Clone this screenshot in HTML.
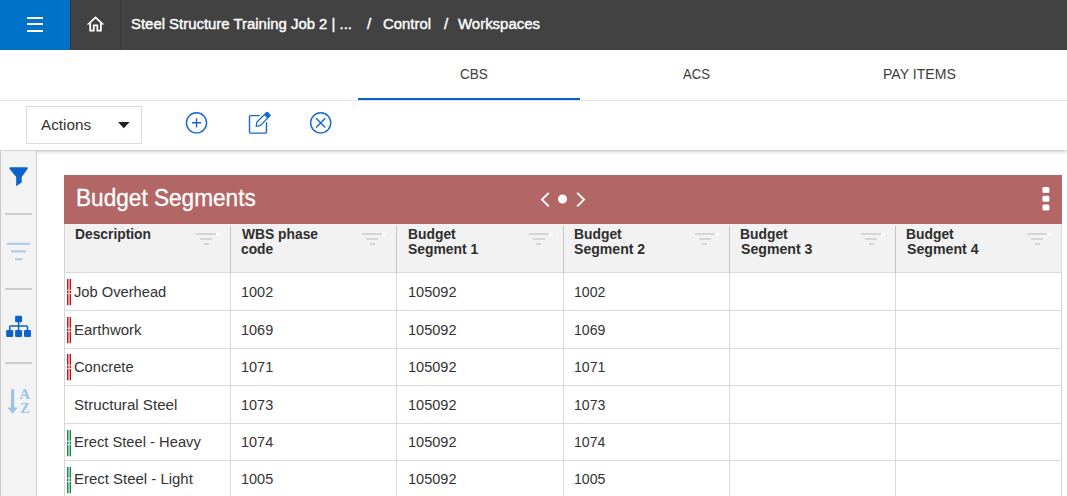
<!DOCTYPE html>
<html><head><meta charset="utf-8">
<style>
*{box-sizing:border-box;margin:0;padding:0}
html,body{width:1067px;height:496px;overflow:hidden;background:#fff;font-family:"Liberation Sans",sans-serif;color:#333}
.abs{position:absolute}
.t{position:absolute;white-space:pre;line-height:20px;transform-origin:0 0;font-family:"Liberation Sans",sans-serif}
.hl{left:64px;width:998px;height:1px;background:#dadada}
.vl{width:1px}
.fi{height:2px;background:#d6d6d6}
#top{position:absolute;left:0;top:0;width:1067px;height:50px;background:#424242}
#menu{position:absolute;left:0;top:0;width:70px;height:50px;background:#0073c8}
#menu i{position:absolute;left:27px;width:16px;height:2px;background:#fff}
#homesep{position:absolute;left:120px;top:0;width:1px;height:50px;background:#363636}
#tabline{position:absolute;left:0;top:100px;width:1067px;height:1px;background:#e2e2e2}
#tabsel{position:absolute;left:358px;top:97.7px;width:222.3px;height:2.4px;background:#0a60c6}
#tbshadow{position:absolute;left:0;top:101px;width:1067px;height:49px;background:#fff;box-shadow:0 1px 4px rgba(0,0,0,.3);clip-path:inset(0 0 -8px 0)}
#actions{position:absolute;left:26px;top:106px;width:116px;height:37.5px;border:1px solid #dadada;background:#fff}
#side{position:absolute;left:0;top:151px;width:37px;height:345px;background:#f3f3f3;border-right:1px solid #cfcfcf;border-left:1px solid #c9c9c9}
.sep{position:absolute;left:4px;width:27px;height:2px;background:#cdcdcd}
#title{position:absolute;left:64px;top:174.7px;width:998px;height:49.3px;background:#b26666}
</style></head><body>
<div id="tbshadow"></div>
<div id="top">
 <div id="menu"><i style="top:17px"></i><i style="top:23px"></i><i style="top:30px"></i></div>
 <svg class="abs" style="left:70px;top:0" width="51" height="50" viewBox="0 0 51 50"><path transform="translate(14.87 13.7) scale(0.89)" fill="#fff" d="M12 5.69l5 4.5V18h-2v-6H9v6H7v-7.81l5-4.5M12 3L2 12h3v8h6v-6h2v6h6v-8h3L12 3z"/></svg>
 <div id="homesep"></div><div class="abs" style="left:70px;top:0;width:1px;height:50px;background:#363636"></div>
</div>
<div id="tabline"></div><div id="tabsel"></div>
<div id="actions"></div>
<svg class="abs" style="left:117.6px;top:121.7px" width="12" height="7" viewBox="0 0 12 7"><path d="M0 0 H11.6 L5.8 6.3 Z" fill="#222"/></svg>
<svg class="abs" style="left:180px;top:106px" width="160" height="34" viewBox="180 106 160 34" fill="none" stroke="#1668cf" stroke-width="1.4">
 <circle cx="196.5" cy="122.8" r="10.1"/><path d="M191.9 122.8 H201.1 M196.5 118.2 V127.4"/>
 <path d="M259.8 115.6 H250.6 Q249.5 115.6 249.5 116.7 V132 Q249.5 133.1 250.6 133.1 H265.4 Q266.5 133.1 266.5 132 V122.3"/>
 <path d="M256.3 126.3 L256.7 122.4 L266.3 112.8 Q267 112.2 267.7 112.8 L269.6 114.7 Q270.2 115.4 269.6 116.1 L260.2 125.7 Z" stroke-width="1.3"/>
 <path d="M264.3 114.8 L266.3 112.8 Q267 112.2 267.7 112.8 L269.6 114.7 Q270.2 115.4 269.6 116.1 L267.7 118.1 Z" fill="#1668cf" stroke-width="1"/>
 <circle cx="320.7" cy="122.8" r="10.1"/><path d="M316.1 118.2 L325.3 127.4 M325.3 118.2 L316.1 127.4"/>
</svg>
<div id="side">
 <div class="sep" style="top:61.8px"></div>
 <div class="sep" style="top:136.8px"></div>
 <div class="sep" style="top:211.4px"></div>
</div>
<svg class="abs" style="left:0;top:160px" width="37" height="260" viewBox="0 160 37 260">
 <path transform="translate(0 0.5)" d="M10.6 166.8 H26.6 Q28.6 167 27.4 168.8 L21.7 176.4 V182 L16.2 185.8 V176.4 L9.8 168.8 Q8.6 167 10.6 166.8 Z" fill="#0a62cc"/>
 <g fill="#a9c9ee"><rect x="6.8" y="242.8" width="23.4" height="2"/><rect x="11" y="250.4" width="15.2" height="2"/><rect x="15" y="258.2" width="7.3" height="2"/></g>
 <g fill="#0a62cc"><rect x="15.1" y="315.7" width="7" height="6.6" rx="1.2"/><rect x="6.2" y="330" width="7" height="7" rx="1.2"/><rect x="15.1" y="330" width="7" height="7" rx="1.2"/><rect x="24" y="330" width="7" height="7" rx="1.2"/></g>
 <path d="M18.6 322 V330.5 M9.7 330.5 V327 Q9.7 325.9 10.8 325.9 H26.4 Q27.5 325.9 27.5 327 V330.5" fill="none" stroke="#0a62cc" stroke-width="1.5"/>
 <path d="M11 389.2 H14.2 V407.6 H17.8 L12.6 413.8 L7.3 407.6 H11 Z" fill="#9dc2ea"/>
 <text x="19.4" y="398.9" font-family="Liberation Serif" font-weight="bold" font-size="14.5" fill="#9dc2ea">A</text>
 <text x="20.2" y="413.3" font-family="Liberation Serif" font-weight="bold" font-size="14" fill="#9dc2ea">Z</text>
</svg>
<div id="title"></div>
<svg class="abs" style="left:535px;top:188px" width="60" height="24" viewBox="535 188 60 24"><path d="M548.8 192.9 L542 199.6 L548.8 206.4 M577.2 192.9 L584 199.6 L577.2 206.4" fill="none" stroke="#fff" stroke-width="2"/><circle cx="562.5" cy="199" r="4.5" fill="#fff"/></svg>
<svg class="abs" style="left:1040px;top:185px" width="12" height="28" viewBox="1040 185 12 28" fill="#fff"><rect x="1042.4" y="187" width="7" height="6" rx="1.5"/><rect x="1042.4" y="195.8" width="7" height="6" rx="1.5"/><rect x="1042.4" y="204.5" width="7" height="6" rx="1.5"/></svg>
<div class="abs" style="left:64px;top:224px;width:998px;height:48.5px;background:#f2f2f2"></div>
<div class="abs hl" style="top:272.00px"></div>
<div class="abs hl" style="top:310.00px"></div>
<div class="abs hl" style="top:348.00px"></div>
<div class="abs hl" style="top:385.00px"></div>
<div class="abs hl" style="top:423.00px"></div>
<div class="abs hl" style="top:460.00px"></div>
<div class="abs vl" style="left:64.0px;top:224px;height:272px;background:#d6d6d6"></div>
<div class="abs vl" style="left:230.0px;top:225.5px;height:47px;background:#c2c2c2"></div>
<div class="abs vl" style="left:230.0px;top:272.5px;height:224px;background:#d9d9d9"></div>
<div class="abs vl" style="left:396.2px;top:225.5px;height:47px;background:#c2c2c2"></div>
<div class="abs vl" style="left:396.2px;top:272.5px;height:224px;background:#d9d9d9"></div>
<div class="abs vl" style="left:562.5px;top:225.5px;height:47px;background:#c2c2c2"></div>
<div class="abs vl" style="left:562.5px;top:272.5px;height:224px;background:#d9d9d9"></div>
<div class="abs vl" style="left:728.8px;top:225.5px;height:47px;background:#c2c2c2"></div>
<div class="abs vl" style="left:728.8px;top:272.5px;height:224px;background:#d9d9d9"></div>
<div class="abs vl" style="left:895.0px;top:225.5px;height:47px;background:#c2c2c2"></div>
<div class="abs vl" style="left:895.0px;top:272.5px;height:224px;background:#d9d9d9"></div>
<div class="abs vl" style="left:1061.3px;top:224px;height:272px;background:#d6d6d6"></div>
<div class="abs fi" style="left:196.3px;top:233.3px;width:20px"></div><div class="abs" style="left:216.3px;top:233px;width:4px;height:3px;background:#fff;opacity:.9"></div><div class="abs fi" style="left:200.3px;top:238.4px;width:12px"></div><div class="abs fi" style="left:203.8px;top:243.4px;width:5px"></div>
<div class="abs fi" style="left:362.3px;top:233.3px;width:20px"></div><div class="abs" style="left:382.3px;top:233px;width:4px;height:3px;background:#fff;opacity:.9"></div><div class="abs fi" style="left:366.3px;top:238.4px;width:12px"></div><div class="abs fi" style="left:369.8px;top:243.4px;width:5px"></div>
<div class="abs fi" style="left:528.5px;top:233.3px;width:20px"></div><div class="abs" style="left:548.5px;top:233px;width:4px;height:3px;background:#fff;opacity:.9"></div><div class="abs fi" style="left:532.5px;top:238.4px;width:12px"></div><div class="abs fi" style="left:536.0px;top:243.4px;width:5px"></div>
<div class="abs fi" style="left:694.8px;top:233.3px;width:20px"></div><div class="abs" style="left:714.8px;top:233px;width:4px;height:3px;background:#fff;opacity:.9"></div><div class="abs fi" style="left:698.8px;top:238.4px;width:12px"></div><div class="abs fi" style="left:702.3px;top:243.4px;width:5px"></div>
<div class="abs fi" style="left:861.1px;top:233.3px;width:20px"></div><div class="abs" style="left:881.1px;top:233px;width:4px;height:3px;background:#fff;opacity:.9"></div><div class="abs fi" style="left:865.1px;top:238.4px;width:12px"></div><div class="abs fi" style="left:868.6px;top:243.4px;width:5px"></div>
<div class="abs fi" style="left:1027.3px;top:233.3px;width:20px"></div><div class="abs" style="left:1047.3px;top:233px;width:4px;height:3px;background:#fff;opacity:.9"></div><div class="abs fi" style="left:1031.3px;top:238.4px;width:12px"></div><div class="abs fi" style="left:1034.8px;top:243.4px;width:5px"></div>
<svg class="abs" style="left:66px;top:278.10px" width="6" height="29" viewBox="0 0 6 29"><path d="M1.75 1 V27.3 M4.3 1 V27.3" stroke="#cc1016" stroke-width="1.45" fill="none"/><path d="M1 12.2 H5.2 M1 15.6 H5.2" stroke="#fff" stroke-opacity=".75" stroke-width="1"/></svg>
<svg class="abs" style="left:66px;top:315.72px" width="6" height="29" viewBox="0 0 6 29"><path d="M1.75 1 V27.3 M4.3 1 V27.3" stroke="#cc1016" stroke-width="1.45" fill="none"/><path d="M1 12.2 H5.2 M1 15.6 H5.2" stroke="#fff" stroke-opacity=".75" stroke-width="1"/></svg>
<svg class="abs" style="left:66px;top:353.34px" width="6" height="29" viewBox="0 0 6 29"><path d="M1.75 1 V27.3 M4.3 1 V27.3" stroke="#cc1016" stroke-width="1.45" fill="none"/><path d="M1 12.2 H5.2 M1 15.6 H5.2" stroke="#fff" stroke-opacity=".75" stroke-width="1"/></svg>
<svg class="abs" style="left:66px;top:428.58px" width="6" height="29" viewBox="0 0 6 29"><path d="M1.75 1 V27.3 M4.3 1 V27.3" stroke="#128a43" stroke-width="1.45" fill="none"/><path d="M1 12.2 H5.2 M1 15.6 H5.2" stroke="#fff" stroke-opacity=".75" stroke-width="1"/></svg>
<svg class="abs" style="left:66px;top:466.20px" width="6" height="29" viewBox="0 0 6 29"><path d="M1.75 1 V27.3 M4.3 1 V27.3" stroke="#128a43" stroke-width="1.45" fill="none"/><path d="M1 12.2 H5.2 M1 15.6 H5.2" stroke="#fff" stroke-opacity=".75" stroke-width="1"/></svg>
<span class="t" style="left:131.0px;top:13.50px;font-size:15.3px;-webkit-text-stroke:0.4px #fff;color:#fff;transform:scaleX(0.9746);">Steel Structure Training Job 2 | ...</span>
<span class="t" style="left:367.0px;top:13.50px;font-size:15.3px;-webkit-text-stroke:0.4px #fff;color:#fff;">/</span>
<span class="t" style="left:383.0px;top:13.50px;font-size:15.3px;-webkit-text-stroke:0.4px #fff;color:#fff;transform:scaleX(0.9734);">Control</span>
<span class="t" style="left:444.0px;top:13.50px;font-size:15.3px;-webkit-text-stroke:0.4px #fff;color:#fff;">/</span>
<span class="t" style="left:458.0px;top:13.50px;font-size:15.3px;-webkit-text-stroke:0.4px #fff;color:#fff;transform:scaleX(0.9775);">Workspaces</span>
<span class="t" style="left:460.2px;top:63.81px;font-size:14.7px;color:#3c3c3c;transform:scaleX(0.9204);">CBS</span>
<span class="t" style="left:683.1px;top:63.81px;font-size:14.7px;color:#3c3c3c;transform:scaleX(0.8939);">ACS</span>
<span class="t" style="left:882.6px;top:63.81px;font-size:14.7px;color:#3c3c3c;transform:scaleX(0.9591);">PAY ITEMS</span>
<span class="t" style="left:40.5px;top:114.53px;font-size:15.2px;color:#333;transform:scaleX(1.0058);">Actions</span>
<span class="t" style="left:75.9px;top:188.33px;font-size:23.3px;-webkit-text-stroke:0.3px #fff;color:#fff;transform:scaleX(0.9707);">Budget Segments</span>
<span class="t" style="left:75.4px;top:223.93px;font-size:15.2px;font-weight:bold;color:#2e2e2e;transform:scaleX(0.9097);">Description</span>
<span class="t" style="left:241.6px;top:223.93px;font-size:15.2px;font-weight:bold;color:#2e2e2e;transform:scaleX(0.9097);">WBS phase</span>
<span class="t" style="left:241.4px;top:238.63px;font-size:15.2px;font-weight:bold;color:#2e2e2e;transform:scaleX(0.9082);">code</span>
<span class="t" style="left:407.6px;top:223.93px;font-size:15.2px;font-weight:bold;color:#2e2e2e;transform:scaleX(0.9118);">Budget</span>
<span class="t" style="left:407.9px;top:238.63px;font-size:15.2px;font-weight:bold;color:#2e2e2e;transform:scaleX(0.9126);">Segment 1</span>
<span class="t" style="left:573.9px;top:223.93px;font-size:15.2px;font-weight:bold;color:#2e2e2e;transform:scaleX(0.9118);">Budget</span>
<span class="t" style="left:574.2px;top:238.63px;font-size:15.2px;font-weight:bold;color:#2e2e2e;transform:scaleX(0.9269);">Segment 2</span>
<span class="t" style="left:740.2px;top:223.93px;font-size:15.2px;font-weight:bold;color:#2e2e2e;transform:scaleX(0.9118);">Budget</span>
<span class="t" style="left:740.5px;top:238.63px;font-size:15.2px;font-weight:bold;color:#2e2e2e;transform:scaleX(0.9295);">Segment 3</span>
<span class="t" style="left:906.4px;top:223.93px;font-size:15.2px;font-weight:bold;color:#2e2e2e;transform:scaleX(0.9118);">Budget</span>
<span class="t" style="left:906.7px;top:238.63px;font-size:15.2px;font-weight:bold;color:#2e2e2e;transform:scaleX(0.9321);">Segment 4</span>
<span class="t" style="left:74.0px;top:282.00px;font-size:15.3px;color:#333;transform:scaleX(0.9605);">Job Overhead</span>
<span class="t" style="left:240.9px;top:282.00px;font-size:15.3px;color:#333;transform:scaleX(0.9462);">1002</span>
<span class="t" style="left:407.8px;top:282.00px;font-size:15.3px;color:#333;transform:scaleX(0.9501);">105092</span>
<span class="t" style="left:573.8px;top:282.00px;font-size:15.3px;color:#333;transform:scaleX(0.9227);">1002</span>
<span class="t" style="left:74.0px;top:319.90px;font-size:15.3px;color:#333;transform:scaleX(0.9817);">Earthwork</span>
<span class="t" style="left:240.9px;top:319.90px;font-size:15.3px;color:#333;transform:scaleX(0.9462);">1069</span>
<span class="t" style="left:407.8px;top:319.90px;font-size:15.3px;color:#333;transform:scaleX(0.9501);">105092</span>
<span class="t" style="left:573.8px;top:319.90px;font-size:15.3px;color:#333;transform:scaleX(0.9227);">1069</span>
<span class="t" style="left:74.0px;top:356.90px;font-size:15.3px;color:#333;transform:scaleX(0.9601);">Concrete</span>
<span class="t" style="left:240.9px;top:356.90px;font-size:15.3px;color:#333;transform:scaleX(0.9462);">1071</span>
<span class="t" style="left:407.8px;top:356.90px;font-size:15.3px;color:#333;transform:scaleX(0.9501);">105092</span>
<span class="t" style="left:573.8px;top:356.90px;font-size:15.3px;color:#333;transform:scaleX(0.9227);">1071</span>
<span class="t" style="left:74.0px;top:394.50px;font-size:15.3px;color:#333;transform:scaleX(0.9878);">Structural Steel</span>
<span class="t" style="left:240.9px;top:394.50px;font-size:15.3px;color:#333;transform:scaleX(0.9462);">1073</span>
<span class="t" style="left:407.8px;top:394.50px;font-size:15.3px;color:#333;transform:scaleX(0.9501);">105092</span>
<span class="t" style="left:573.8px;top:394.50px;font-size:15.3px;color:#333;transform:scaleX(0.9227);">1073</span>
<span class="t" style="left:74.0px;top:431.60px;font-size:15.3px;color:#333;transform:scaleX(0.9622);">Erect Steel - Heavy</span>
<span class="t" style="left:240.9px;top:431.60px;font-size:15.3px;color:#333;transform:scaleX(0.9462);">1074</span>
<span class="t" style="left:407.8px;top:431.60px;font-size:15.3px;color:#333;transform:scaleX(0.9501);">105092</span>
<span class="t" style="left:573.8px;top:431.60px;font-size:15.3px;color:#333;transform:scaleX(0.9227);">1074</span>
<span class="t" style="left:74.0px;top:468.90px;font-size:15.3px;color:#333;transform:scaleX(0.9770);">Erect Steel - Light</span>
<span class="t" style="left:240.9px;top:468.90px;font-size:15.3px;color:#333;transform:scaleX(0.9462);">1005</span>
<span class="t" style="left:407.8px;top:468.90px;font-size:15.3px;color:#333;transform:scaleX(0.9501);">105092</span>
<span class="t" style="left:573.8px;top:468.90px;font-size:15.3px;color:#333;transform:scaleX(0.9227);">1005</span>
</body></html>
